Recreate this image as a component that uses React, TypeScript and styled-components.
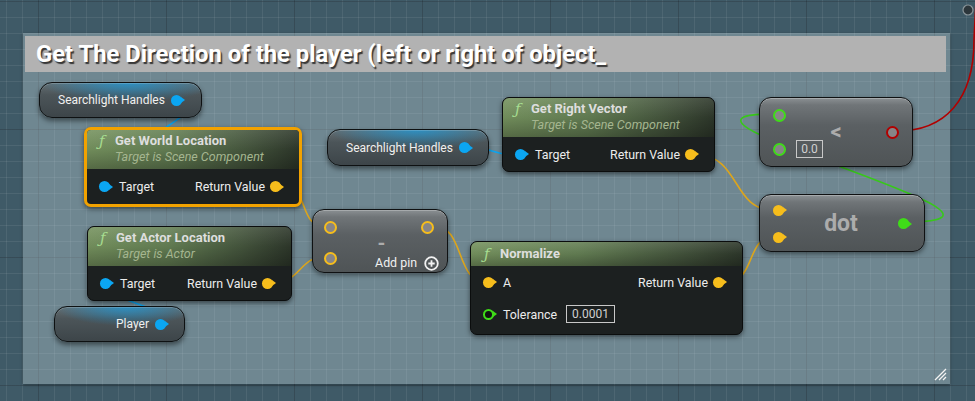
import React from 'react';
import styled, { createGlobalStyle } from 'styled-components';

const GlobalStyle = createGlobalStyle`
  html, body { margin: 0; padding: 0; background: #3f5a67; }
  body { font-family: Roboto, "Noto Sans", sans-serif; }
`;

const BLUE = '#0ba6f2';
const YELLOW = '#f6bd1c';
const GREEN = '#3fdc18';
const RED = '#b10000';

const Canvas = styled.div`
  position: relative;
  width: 975px;
  height: 401px;
  overflow: hidden;
  background-color: #3f5a67;
  background-image:
    linear-gradient(to right, rgba(18, 32, 40, 0.38) 1px, transparent 1px),
    linear-gradient(to bottom, rgba(18, 32, 40, 0.38) 1px, transparent 1px),
    linear-gradient(to right, rgba(255, 255, 255, 0.07) 1px, transparent 1px),
    linear-gradient(to bottom, rgba(255, 255, 255, 0.07) 1px, transparent 1px);
  background-size: 128px 128px, 128px 128px, 16px 16px, 16px 16px;
  background-position: 38px 0, 0 1px, 6px 0, 0 1px;
`;

const CommentBox = styled.div`
  position: absolute;
  left: 23px;
  top: 33px;
  width: 927px;
  height: 351px;
  box-sizing: border-box;
  padding: 3px 4px 0 2px;
  background: rgba(205, 222, 230, 0.34);
  box-shadow: 0 1px 3px rgba(0, 0, 0, 0.35);
`;

const CommentHeader = styled.div`
  height: 36px;
  display: flex;
  align-items: center;
  padding-left: 11px;
  background: #b2b2b2;
  color: #ffffff;
  font-size: 23.8px;
  font-weight: 700;
  text-shadow: 1.5px 1.5px 1px rgba(0, 0, 0, 0.7);
  white-space: nowrap;
`;

const ResizeGrip = styled.svg`
  position: absolute;
  right: 3px;
  bottom: 3px;
`;

const WireLayer = styled.svg`
  position: absolute;
  left: 0;
  top: 0;
`;

type Pos = { $x: number; $y: number; $w: number; $h?: number };

const FuncNode = styled.div<Pos & { $selected?: boolean }>`
  position: absolute;
  left: ${(p) => p.$x}px;
  top: ${(p) => p.$y}px;
  width: ${(p) => p.$w}px;
  box-sizing: border-box;
  border-radius: 7px;
  overflow: hidden;
  border: ${(p) => (p.$selected ? '3px solid #f2a200' : '1px solid #0b0d0d')};
  background: #1c2020;
  box-shadow: 0 2px 5px rgba(0, 0, 0, 0.5);
`;

const FuncHeader = styled.div<{ $padLeft?: number; $padTop?: number }>`
  display: grid;
  grid-template-columns: 16px 1fr;
  padding: ${(p) => p.$padTop ?? 3}px 10px 4px ${(p) => p.$padLeft ?? 12}px;
  background:
    linear-gradient(180deg, rgba(255, 255, 255, 0.1) 0%, rgba(0, 0, 0, 0.05) 50%, rgba(0, 0, 0, 0.28) 100%),
    linear-gradient(90deg, #76935f 0%, #647f54 40%, #46573e 75%, #2e382b 100%);
`;

const FuncIcon = styled.span`
  grid-row: 1;
  font-family: "DejaVu Serif", serif;
  font-style: italic;
  font-size: 15px;
  line-height: 16px;
  color: #a6dc90;
`;

const FuncTitle = styled.span`
  grid-column: 2;
  font-size: 13px;
  font-weight: 700;
  line-height: 16px;
  color: #dedede;
  white-space: nowrap;
`;

const FuncSubtitle = styled.span`
  grid-column: 2;
  font-size: 12.5px;
  font-style: italic;
  line-height: 16px;
  color: #a5b690;
  white-space: nowrap;
`;

const FuncBody = styled.div<{ $padTop?: number; $padBottom?: number }>`
  display: flex;
  flex-direction: column;
  padding: ${(p) => p.$padTop ?? 0}px 0 ${(p) => p.$padBottom ?? 0}px;
`;

const PinRow = styled.div<{ $h: number }>`
  height: ${(p) => p.$h}px;
  display: flex;
  align-items: center;
  justify-content: space-between;
  padding: 0 18px 0 12px;
  color: #ececec;
  font-size: 12.4px;
`;

const PinGroup = styled.div<{ $gap: number }>`
  display: flex;
  align-items: center;
  gap: ${(p) => p.$gap}px;
  white-space: nowrap;
`;

const DataPin = styled.span<{ $color: string; $hollow?: boolean }>`
  position: relative;
  flex: none;
  display: inline-block;
  width: 11px;
  height: 11px;
  border-radius: 50%;
  box-sizing: border-box;
  background: ${(p) => (p.$hollow ? '#101212' : p.$color)};
  border: ${(p) => (p.$hollow ? `2px solid ${p.$color}` : 'none')};
  &::after {
    content: '';
    position: absolute;
    left: ${(p) => (p.$hollow ? 'calc(100% + 1px)' : 'calc(100% - 1px)')};
    top: 50%;
    margin-top: -3px;
    border-left: 4px solid ${(p) => p.$color};
    border-top: 3px solid transparent;
    border-bottom: 3px solid transparent;
  }
`;

const RingPin = styled.span<{ $color: string }>`
  flex: none;
  display: inline-block;
  width: 13px;
  height: 13px;
  border-radius: 50%;
  box-sizing: border-box;
  border: 2px solid ${(p) => p.$color};
  background: #878587;
`;

const ValueBox = styled.span<{ $w: number }>`
  display: inline-flex;
  align-items: center;
  justify-content: center;
  width: ${(p) => p.$w}px;
  height: 18px;
  box-sizing: border-box;
  border: 1px solid #c8c8c8;
  color: #d0d0d0;
  font-size: 12px;
`;

const VarNode = styled.div<Pos & { $end?: boolean }>`
  position: absolute;
  left: ${(p) => p.$x}px;
  top: ${(p) => p.$y}px;
  width: ${(p) => p.$w}px;
  height: ${(p) => p.$h}px;
  box-sizing: border-box;
  display: flex;
  align-items: center;
  justify-content: ${(p) => (p.$end ? 'flex-end' : 'flex-start')};
  gap: 6px;
  padding: 0 18px 0 18px;
  border-radius: 13px;
  border: 1px solid #0e1112;
  background:
    radial-gradient(ellipse 55% 55% at 55% 0%, rgba(10, 165, 245, 0.6) 0%, rgba(10, 165, 245, 0) 100%),
    linear-gradient(180deg, #646e72 0%, #4c5559 35%, #3d4549 100%);
  box-shadow: 0 3px 5px rgba(0, 0, 0, 0.45), inset 0 1px 0 rgba(255, 255, 255, 0.18);
  color: #f0f0f0;
  font-size: 12px;
  white-space: nowrap;
`;

const MathNode = styled.div<Pos & { $cols: string; $rows: string; $pad: string; $rowGap: number; $colGap: number }>`
  position: absolute;
  left: ${(p) => p.$x}px;
  top: ${(p) => p.$y}px;
  width: ${(p) => p.$w}px;
  height: ${(p) => p.$h}px;
  box-sizing: border-box;
  display: grid;
  grid-template-columns: ${(p) => p.$cols};
  grid-template-rows: ${(p) => p.$rows};
  row-gap: ${(p) => p.$rowGap}px;
  column-gap: ${(p) => p.$colGap}px;
  align-items: center;
  padding: ${(p) => p.$pad};
  border-radius: 12px;
  border: 1px solid #0f1112;
  background: linear-gradient(180deg, #8b9093 0px, #707578 7px, #5b6063 40%, #4f5456 100%);
  box-shadow: 0 2px 5px rgba(0, 0, 0, 0.45), inset 0 1px 0 rgba(255, 255, 255, 0.25);
`;

const Cell = styled.div<{ $col: string; $row: string; $justify?: string; $align?: string; $mr?: number }>`
  grid-column: ${(p) => p.$col};
  grid-row: ${(p) => p.$row};
  justify-self: ${(p) => p.$justify ?? 'start'};
  align-self: ${(p) => p.$align ?? 'center'};
  margin-right: ${(p) => p.$mr ?? 0}px;
  display: flex;
  align-items: center;
`;

const MathLabel = styled.span<{ $size: number }>`
  font-size: ${(p) => p.$size}px;
  font-weight: 700;
  color: #acacac;
  line-height: 1;
`;

const AddPin = styled.span`
  display: flex;
  align-items: center;
  gap: 7px;
  color: #f0f0f0;
  font-size: 12.4px;
  line-height: 16px;
  white-space: nowrap;
`;

const PlusIcon = () => (
  <svg width="15" height="15" viewBox="0 0 15 15">
    <circle cx="7.5" cy="7.5" r="6.3" fill="none" stroke="#f2f2f2" strokeWidth="1.8" />
    <path d="M7.5 4.3v6.4M4.3 7.5h6.4" stroke="#f2f2f2" strokeWidth="1.8" />
  </svg>
);

const wires: { d: string; c: string }[] = [
  { d: 'M186 99 C236 99, 50 186, 101 186', c: BLUE },
  { d: 'M168 323 C212 323, 56 282, 101 282', c: BLUE },
  { d: 'M468 147 C492 147, 492 155, 516 155', c: BLUE },
  { d: 'M282 186 C310 186, 298 226, 324 226', c: '#dca51c' },
  { d: 'M276 282 C300 282, 300 257, 324 257', c: '#dca51c' },
  { d: 'M434 226 C465 226, 455 282, 486 282', c: '#dca51c' },
  { d: 'M697 155 C740 155, 732 210, 773 210', c: '#dca51c' },
  { d: 'M726 282 C756 282, 746 237, 773 237', c: '#dca51c' },
  { d: 'M907 222 C1070 222, 620 114, 773 114', c: '#38c81a' },
  { d: 'M897 131 C945 131, 974 100, 974 40 L976 0', c: RED },
];

export default function App() {
  return (
    <>
      <GlobalStyle />
      <Canvas>
        <CommentBox>
          <CommentHeader>Get The Direction of the player (left or right of object_</CommentHeader>
          <ResizeGrip width="13" height="13" viewBox="0 0 13 13">
            <path d="M1 12L12 1M5 12L12 5M9 12L12 9" stroke="#f4f4f4" strokeWidth="1.3" />
          </ResizeGrip>
        </CommentBox>

        <WireLayer width="975" height="401" viewBox="0 0 975 401">
          {wires.map((w, i) => (
            <path key={i} d={w.d} fill="none" stroke={w.c} strokeWidth="1.6" />
          ))}
          <circle cx="968" cy="10" r="5" fill="#2c363b" stroke="#8b969b" strokeWidth="1.2" />
        </WireLayer>

        <VarNode $x={39} $y={82} $w={163} $h={36}>
          Searchlight Handles <DataPin $color={BLUE} />
        </VarNode>

        <VarNode $x={327} $y={129} $w={162} $h={37}>
          Searchlight Handles <DataPin $color={BLUE} />
        </VarNode>

        <VarNode $x={54} $y={306} $w={131} $h={36} $end>
          Player <DataPin $color={BLUE} />
        </VarNode>

        <FuncNode $x={84} $y={127} $w={218} $selected>
          <FuncHeader $padLeft={12}>
            <FuncIcon>ƒ</FuncIcon>
            <FuncTitle>Get World Location</FuncTitle>
            <FuncSubtitle>Target is Scene Component</FuncSubtitle>
          </FuncHeader>
          <FuncBody>
            <PinRow $h={35}>
              <PinGroup $gap={9}>
                <DataPin $color={BLUE} />
                Target
              </PinGroup>
              <PinGroup $gap={5}>
                Return Value
                <DataPin $color={YELLOW} />
              </PinGroup>
            </PinRow>
          </FuncBody>
        </FuncNode>

        <FuncNode $x={87} $y={226} $w={205}>
          <FuncHeader>
            <FuncIcon>ƒ</FuncIcon>
            <FuncTitle>Get Actor Location</FuncTitle>
            <FuncSubtitle>Target is Actor</FuncSubtitle>
          </FuncHeader>
          <FuncBody>
            <PinRow $h={34}>
              <PinGroup $gap={9}>
                <DataPin $color={BLUE} />
                Target
              </PinGroup>
              <PinGroup $gap={5}>
                Return Value
                <DataPin $color={YELLOW} />
              </PinGroup>
            </PinRow>
          </FuncBody>
        </FuncNode>

        <FuncNode $x={502} $y={97} $w={213}>
          <FuncHeader>
            <FuncIcon>ƒ</FuncIcon>
            <FuncTitle>Get Right Vector</FuncTitle>
            <FuncSubtitle>Target is Scene Component</FuncSubtitle>
          </FuncHeader>
          <FuncBody>
            <PinRow $h={34}>
              <PinGroup $gap={9}>
                <DataPin $color={BLUE} />
                Target
              </PinGroup>
              <PinGroup $gap={5}>
                Return Value
                <DataPin $color={YELLOW} />
              </PinGroup>
            </PinRow>
          </FuncBody>
        </FuncNode>

        <FuncNode $x={470} $y={241} $w={273}>
          <FuncHeader $padLeft={13} $padTop={4}>
            <FuncIcon>ƒ</FuncIcon>
            <FuncTitle>Normalize</FuncTitle>
          </FuncHeader>
          <FuncBody $padTop={0} $padBottom={4}>
            <PinRow $h={32}>
              <PinGroup $gap={9}>
                <DataPin $color={YELLOW} />A
              </PinGroup>
              <PinGroup $gap={5}>
                Return Value
                <DataPin $color={YELLOW} />
              </PinGroup>
            </PinRow>
            <PinRow $h={32}>
              <PinGroup $gap={9}>
                <DataPin $color={GREEN} $hollow />
                Tolerance
                <ValueBox $w={49}>0.0001</ValueBox>
              </PinGroup>
            </PinRow>
          </FuncBody>
        </FuncNode>

        <MathNode
          $x={312}
          $y={209}
          $w={136}
          $h={64}
          $cols="13px 1fr auto"
          $rows="26px 26px"
          $rowGap={5}
          $colGap={0}
          $pad="4px 8px 0 11px"
        >
          <Cell $col="1" $row="1">
            <RingPin $color={YELLOW} />
          </Cell>
          <Cell $col="1" $row="2">
            <RingPin $color={YELLOW} />
          </Cell>
          <Cell $col="1 / -1" $row="1 / -1" $justify="center">
            <MathLabel $size={20}>-</MathLabel>
          </Cell>
          <Cell $col="3" $row="1" $justify="end" $mr={5}>
            <RingPin $color={YELLOW} />
          </Cell>
          <Cell $col="3" $row="2" $justify="end" $align="end">
            <AddPin>
              Add pin <PlusIcon />
            </AddPin>
          </Cell>
        </MathNode>

        <MathNode
          $x={759}
          $y={97}
          $w={154}
          $h={70}
          $cols="13px auto 1fr 13px"
          $rows="26px 26px"
          $rowGap={8}
          $colGap={10}
          $pad="4px 13px 4px 13px"
        >
          <Cell $col="1" $row="1">
            <RingPin $color={GREEN} />
          </Cell>
          <Cell $col="1" $row="2">
            <RingPin $color={GREEN} />
          </Cell>
          <Cell $col="2" $row="2">
            <ValueBox $w={27}>0.0</ValueBox>
          </Cell>
          <Cell $col="1 / -1" $row="1 / -1" $justify="center">
            <MathLabel $size={22}>&lt;</MathLabel>
          </Cell>
          <Cell $col="4" $row="1 / -1">
            <RingPin $color={RED} />
          </Cell>
        </MathNode>

        <MathNode
          $x={759}
          $y={194}
          $w={166}
          $h={58}
          $cols="11px 1fr 11px"
          $rows="22px 22px"
          $rowGap={5}
          $colGap={0}
          $pad="4px 15px 0 13px"
        >
          <Cell $col="1" $row="1">
            <DataPin $color={YELLOW} />
          </Cell>
          <Cell $col="1" $row="2">
            <DataPin $color={YELLOW} />
          </Cell>
          <Cell $col="1 / -1" $row="1 / -1" $justify="center">
            <MathLabel $size={23}>dot</MathLabel>
          </Cell>
          <Cell $col="3" $row="1 / -1">
            <DataPin $color={GREEN} />
          </Cell>
        </MathNode>
      </Canvas>
    </>
  );
}
